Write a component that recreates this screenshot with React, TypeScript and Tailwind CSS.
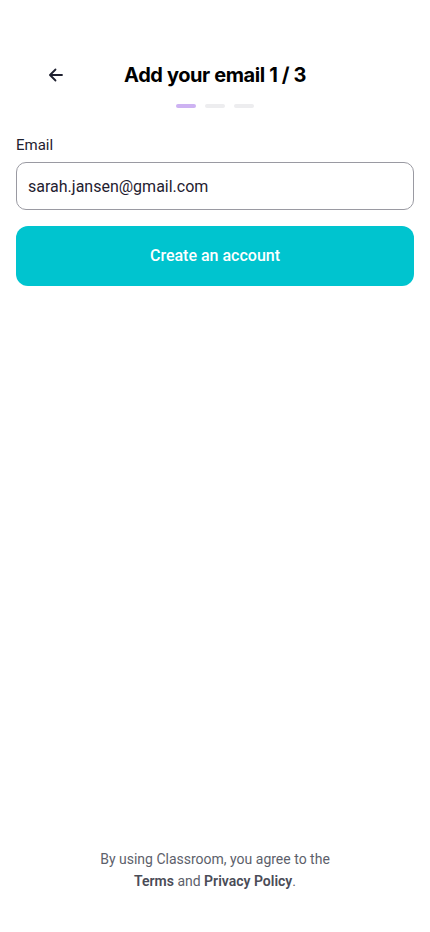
import React, { useState } from 'react';

const steps = [true, false, false];

export default function App() {
  const [email, setEmail] = useState('sarah.jansen@gmail.com');

  return (
    <div className="flex min-h-[932px] w-full flex-col bg-white font-['Roboto',sans-serif] text-[#1f2130]">
      {/* Header */}
      <div className="relative mt-[59px] flex h-[32px] items-center justify-center">
        <button className="absolute left-[40px] top-0 flex h-[32px] w-[32px] items-center justify-center text-[#1f2130]">
          <svg width="16" height="16" viewBox="0 0 16 16" fill="none" stroke="currentColor" strokeWidth="1.8" strokeLinecap="round" strokeLinejoin="round">
            <path d="M14 8H2.5" />
            <path d="M7.5 2.5L2 8l5.5 5.5" />
          </svg>
        </button>
        <h1 className="font-['Inter',sans-serif] text-[20px] font-bold tracking-[-0.4px] text-black">Add your email 1 / 3</h1>
      </div>

      {/* Progress */}
      <div className="mt-[13px] flex justify-center gap-[9px]">
        {steps.map((active, i) => (
          <div key={i} className={active ? 'h-[4px] w-[20px] rounded-full bg-[#cdb2f2]' : 'h-[4px] w-[20px] rounded-full bg-[#ededef]'} />
        ))}
      </div>

      {/* Form */}
      <div className="mt-[26px] px-[16px]">
        <label htmlFor="email" className="block text-[15px] leading-[22px] text-[#1f2130]">Email</label>
        <input
          id="email"
          type="email"
          value={email}
          onChange={(e) => setEmail(e.target.value)}
          className="mt-[6px] h-[48px] w-full rounded-[10px] border border-[#9a9aa2] px-[11px] text-[16px] text-[#1f2130] outline-none"
        />
        <button className="mt-[16px] flex h-[60px] w-full items-center justify-center rounded-[12px] bg-[#00c4cf] text-[16px] font-medium text-white">
          Create an account
        </button>
      </div>

      {/* Footer */}
      <div className="mt-auto mb-[40px] text-center text-[14px] leading-[22px] text-[#5d5f6b]">
        <p>By using Classroom, you agree to the</p>
        <p>
          <span className="font-semibold text-[#4a4c57]">Terms</span> and{' '}
          <span className="font-semibold text-[#4a4c57]">Privacy Policy</span>.
        </p>
      </div>
    </div>
  );
}
